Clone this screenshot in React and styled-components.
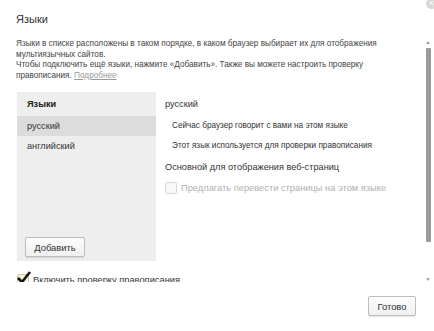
import React from "react";
import styled, { createGlobalStyle } from "styled-components";

const GlobalStyle = createGlobalStyle`
  body {
    margin: 0;
    background: #fff;
    font-family: "Liberation Sans", Arial, sans-serif;
  }
`;

const Dialog = styled.div`
  position: relative;
  width: 434px;
  height: 331px;
  background: #fff;
  overflow: hidden;
  color: #333;
`;

const CloseButton = styled.div`
  position: absolute;
  top: -2px;
  right: -3px;
  width: 11px;
  height: 11px;
  border-radius: 50%;
  background: #d8d8d8;
  color: #fff;
  font-size: 9px;
  line-height: 11px;
  text-align: center;
`;

const Title = styled.h1`
  margin: 0;
  padding: 13px 16px 0;
  height: 26px;
  font-size: 11px;
  font-weight: normal;
  color: #333;
`;

const Body = styled.div`
  display: flex;
  height: 243px;
`;

const Content = styled.div`
  flex: 1;
  overflow: hidden;
  padding: 0 0 0 16px;
`;

const Description = styled.p`
  margin: 0;
  font-size: 8.2px;
  line-height: 10.6px;
  color: #444;
  white-space: nowrap;
`;

const MoreLink = styled.a`
  color: #999;
  text-decoration: underline;
`;

const Languages = styled.div`
  display: flex;
  margin-top: 11px;
  height: 169px;
`;

const LangList = styled.div`
  width: 139px;
  margin-left: 1px;
  background: #eee;
  display: flex;
  flex-direction: column;
  padding-bottom: 4px;
  box-sizing: border-box;
`;

const ListHeader = styled.div`
  padding: 0 10px;
  height: 24px;
  line-height: 24px;
  font-size: 9.2px;
  font-weight: bold;
  color: #222;
`;

const ListItem = styled.div`
  padding: 0 10px;
  height: 20px;
  line-height: 20px;
  font-size: 9.2px;
  color: #333;
  background: ${(p) => (p.$active ? "#dcdcdc" : "transparent")};
`;

const Spacer = styled.div`
  flex: 1;
`;

const Button = styled.button`
  font-family: "Liberation Sans", Arial, sans-serif;
  font-size: 9.4px;
  color: #333;
  background: linear-gradient(#fdfdfd, #f0f0f0);
  border: 1px solid #bdbdbd;
  border-radius: 2px;
  box-shadow: 0 1px 1px rgba(0, 0, 0, 0.1);
  padding: 0;
  height: 20px;
  width: ${(p) => p.$width || "auto"};
  cursor: pointer;
`;

const AddButton = styled(Button)`
  margin-left: 8px;
  align-self: flex-start;
`;

const Details = styled.div`
  flex: 1;
  padding-left: 9px;
`;

const DetailTitle = styled.div`
  height: 24px;
  line-height: 24px;
  font-size: 9.2px;
  color: #333;
`;

const Note = styled.div`
  height: 20px;
  line-height: 20px;
  padding-left: 7px;
  font-size: 8.2px;
  color: #333;
`;

const MainLabel = styled.div`
  height: 22px;
  line-height: 22px;
  font-size: 9.2px;
  color: #333;
`;

const CheckRow = styled.label`
  display: flex;
  align-items: center;
  gap: 4px;
  font-size: 9.3px;
  color: ${(p) => (p.$disabled ? "#b0b0b0" : "#333")};
  height: 20px;
`;

const Box = styled.span`
  width: 10px;
  height: 10px;
  border: 1px solid ${(p) => (p.$checked ? "#c8c8a0" : "#d8d8d8")};
  background: ${(p) => (p.$checked ? "#f6f3d8" : "#f8f8f8")};
  border-radius: 2px;
  position: relative;
  flex: none;
`;

const SpellRow = styled(CheckRow)`
  margin-top: 9px;
  margin-left: 1px;
  color: #333;
`;

const Scrollbar = styled.div`
  width: 8px;
  margin-right: 2px;
  display: flex;
  flex-direction: column;
  align-items: center;
  color: #888;
  font-size: 5px;
`;

const Track = styled.div`
  flex: 1;
  width: 5px;
  margin: 3px 0;
  display: flex;
  flex-direction: column;
`;

const Thumb = styled.div`
  height: 194px;
  background: #9a9a9a;
  border-radius: 1px;
`;

const Footer = styled.div`
  display: flex;
  justify-content: flex-end;
  padding: 14px 18px 0 0;
`;

const Check = () => (
  <svg width="14" height="13" viewBox="0 0 14 13" style={{ position: "absolute", left: -1, top: -4 }}>
    <path d="M1 7 L5 11 L13 1" fill="none" stroke="#111" strokeWidth="2.6" />
  </svg>
);

export default function App() {
  return (
    <Dialog>
      <GlobalStyle />
      <CloseButton>×</CloseButton>
      <Title>Языки</Title>
      <Body>
        <Content>
          <Description>
            Языки в списке расположены в таком порядке, в каком браузер выбирает их для отображения
            <br />
            мультиязычных сайтов.
            <br />
            Чтобы подключить ещё языки, нажмите «Добавить». Также вы можете настроить проверку
            <br />
            правописания. <MoreLink>Подробнее</MoreLink>
          </Description>
          <Languages>
            <LangList>
              <ListHeader>Языки</ListHeader>
              <ListItem $active>русский</ListItem>
              <ListItem>английский</ListItem>
              <Spacer />
              <AddButton $width="60px">Добавить</AddButton>
            </LangList>
            <Details>
              <DetailTitle>русский</DetailTitle>
              <Note>Сейчас браузер говорит с вами на этом языке</Note>
              <Note>Этот язык используется для проверки правописания</Note>
              <MainLabel>Основной для отображения веб-страниц</MainLabel>
              <CheckRow $disabled>
                <Box />
                Предлагать перевести страницы на этом языке
              </CheckRow>
            </Details>
          </Languages>
          <SpellRow>
            <Box $checked>
              <Check />
            </Box>
            Включить проверку правописания
          </SpellRow>
        </Content>
        <Scrollbar>
          <span>▲</span>
          <Track>
            <Thumb />
          </Track>
          <span>▼</span>
        </Scrollbar>
      </Body>
      <Footer>
        <Button $width="48px">Готово</Button>
      </Footer>
    </Dialog>
  );
}
